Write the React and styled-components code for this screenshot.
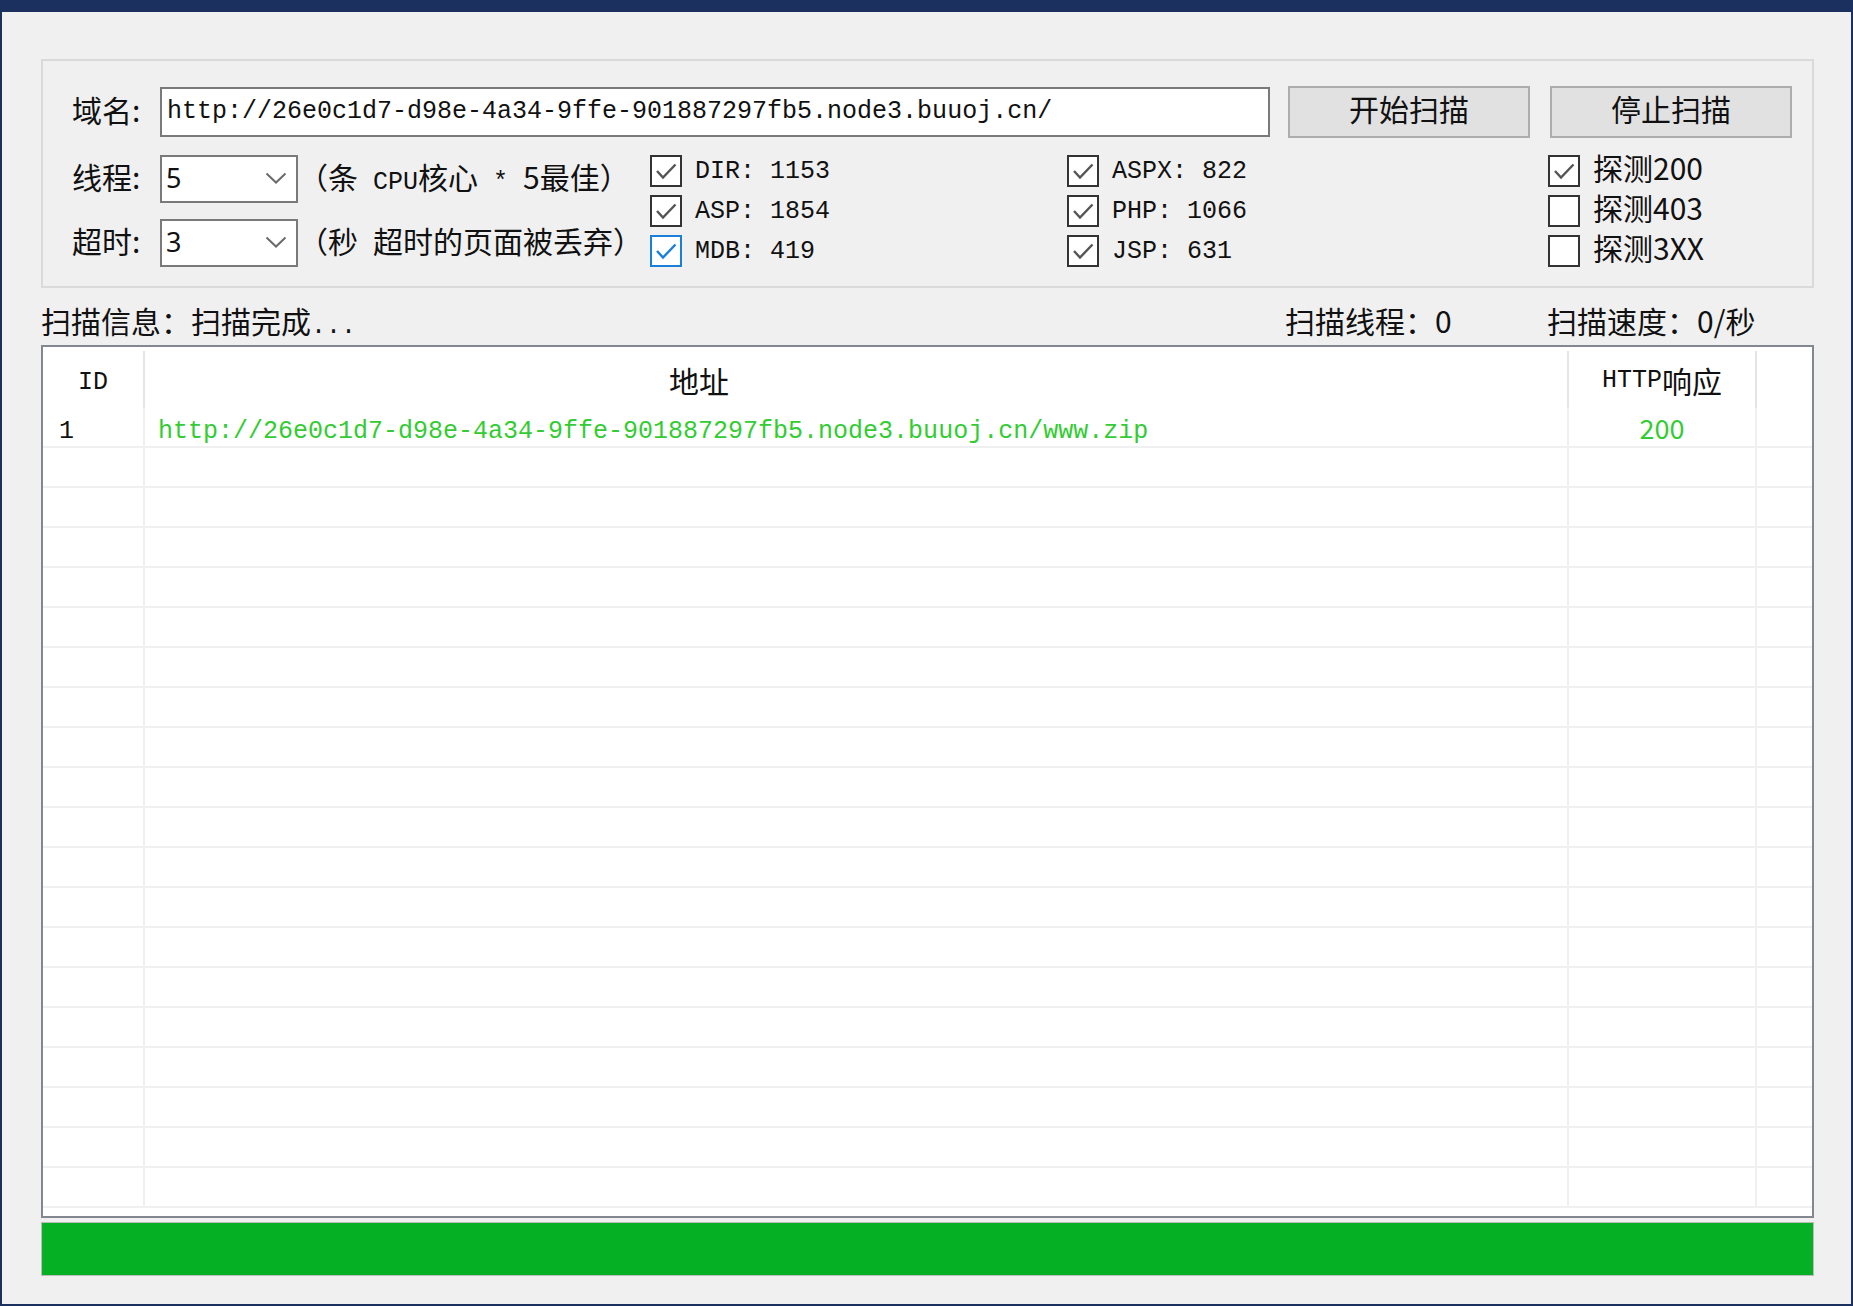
import React from 'react'
import styled, { createGlobalStyle } from 'styled-components'

const navy = '#1b305e'
const cjkFont = `"Noto Sans CJK SC", "Noto Sans", sans-serif`
const monoFont = `"Liberation Mono", "Noto Sans CJK SC", monospace`
const listColumns = '102px 1424px 188px 1fr'

const GlobalStyle = createGlobalStyle`
  html, body {
    margin: 0;
    padding: 0;
    background: ${navy};
  }
  body {
    font-family: ${cjkFont};
  }
`

const Window = styled.div`
  width: 1853px;
  height: 1306px;
  box-sizing: border-box;
  border: 2px solid ${navy};
  border-top-width: 12px;
  background: #f0f0f0;
  padding: 47px 37px 28px 39px;
  display: flex;
  flex-direction: column;
  color: #111;
  font-size: 30px;
`

const Latin = styled.span`
  font-family: ${monoFont};
  font-size: 25px;
`

const GroupBox = styled.div`
  height: 229px;
  box-sizing: border-box;
  border: 2px solid #dadada;
  padding: 24px 20px 19px 29px;
  display: flex;
  flex-direction: column;
  gap: 17px;
`

const TopRow = styled.div`
  display: flex;
  align-items: center;
  height: 53px;
`

const FieldLabel = styled.span`
  width: 88px;
  flex: none;
  padding-bottom: 6px;
  line-height: 1;
  white-space: nowrap;
`

const UrlInput = styled.div`
  flex: 1;
  height: 50px;
  box-sizing: border-box;
  border: 2px solid #7a7a7a;
  background: #fff;
  display: flex;
  align-items: center;
  padding-left: 5px;
  margin-right: 18px;
  font-family: ${monoFont};
  font-size: 25px;
  white-space: nowrap;
  overflow: hidden;
`

const Button = styled.div`
  width: 242px;
  height: 52px;
  box-sizing: border-box;
  border: 2px solid #adadad;
  background: #e1e1e1;
  display: flex;
  align-items: center;
  justify-content: center;
  padding-bottom: 7px;
  line-height: 1;
  & + & {
    margin-left: 20px;
  }
`

const OptionsGrid = styled.div`
  display: grid;
  grid-template-columns: 578px 417px 481px 1fr;
  grid-template-rows: repeat(3, 32px);
  row-gap: 8px;
  grid-auto-flow: column;
`

const LimitsBlock = styled.div`
  grid-row: 1 / 4;
  grid-column: 1;
  display: flex;
  flex-direction: column;
  justify-content: space-between;
`

const LimitRow = styled.div`
  display: flex;
  align-items: center;
  height: 48px;
`

const Combo = styled.div`
  width: 138px;
  height: 48px;
  flex: none;
  box-sizing: border-box;
  border: 2px solid #7a7a7a;
  background: #fff;
  display: flex;
  align-items: center;
  justify-content: space-between;
  padding: 0 9px 3px 4px;
  font-family: "Noto Sans", sans-serif;
  font-size: 27px;
  line-height: 1;
`

const Hint = styled.span`
  padding-bottom: 3px;
  white-space: nowrap;
  line-height: 1;
`

const CheckItem = styled.div`
  display: flex;
  align-items: center;
  gap: 13px;
  line-height: 1;
  white-space: nowrap;
`

const CheckText = styled.span`
  padding-bottom: 9px;
`

const Box = styled.div`
  width: 32px;
  height: 32px;
  flex: none;
  box-sizing: border-box;
  border: 2px solid ${p => (p.$focus ? '#1a7fd9' : '#333')};
  background: #fff;
  display: flex;
  align-items: center;
  justify-content: center;
`

const StatusBar = styled.div`
  height: 57px;
  box-sizing: border-box;
  padding-top: 12px;
  display: grid;
  grid-template-columns: 1244px 262px 1fr;
  line-height: 40px;
  white-space: nowrap;
`

const ListView = styled.div`
  height: 873px;
  box-sizing: border-box;
  border: 2px solid #828790;
  background: #fff;
  overflow: hidden;
`

const HeaderRow = styled.div`
  display: grid;
  grid-template-columns: ${listColumns};
  height: 61px;
`

const HeaderCell = styled.div`
  display: flex;
  align-items: center;
  justify-content: ${p => (p.$indent ? 'flex-start' : 'center')};
  padding: ${p => p.$pad ?? 1}px 0 0 ${p => p.$indent || 0}px;
  margin-top: 4px;
  box-sizing: border-box;
  border-right: ${p => (p.$filler ? 'none' : '2px solid #e5e5e5')};
  line-height: 1;
  white-space: nowrap;
`

const Row = styled.div`
  display: grid;
  grid-template-columns: ${listColumns};
  height: 40px;
  box-sizing: border-box;
  border-bottom: 2px solid #f0f0f0;
`

const Cell = styled.div`
  display: flex;
  align-items: center;
  justify-content: ${p => (p.$center ? 'center' : 'flex-start')};
  padding: ${p => (p.$latin ? 9 : 0)}px 0 0 ${p => p.$indent || 0}px;
  border-right: ${p => (p.$filler ? 'none' : '2px solid #f0f0f0')};
  color: ${p => (p.$ok ? '#33cc33' : '#111')};
  font-size: 27px;
  line-height: 1;
  white-space: nowrap;
  overflow: hidden;
`

const Progress = styled.div`
  margin-top: 4px;
  height: 54px;
  box-sizing: border-box;
  border: 1px solid #bcbcbc;
  background: #e6e6e6;
`

const ProgressFill = styled.div`
  height: 100%;
  width: ${p => p.$value}%;
  background: #06b025;
`

const Chevron = () => (
  <svg width="22" height="12" viewBox="0 0 22 12">
    <path d="M1.5 1.5 L11 10.5 L20.5 1.5" fill="none" stroke="#6b6b6b" strokeWidth="2" />
  </svg>
)

const Checkbox = ({ checked, focus, children }) => (
  <CheckItem>
    <Box $focus={focus}>
      {checked && (
        <svg width="28" height="28" viewBox="0 0 28 28">
          <path
            d="M5 14 L11 20.5 L23.5 7.5"
            fill="none"
            stroke={focus ? '#1a7fd9' : '#555'}
            strokeWidth="2.4"
          />
        </svg>
      )}
    </Box>
    <CheckText>{children}</CheckText>
  </CheckItem>
)

const url = 'http://26e0c1d7-d98e-4a34-9ffe-901887297fb5.node3.buuoj.cn/'

const dicts = [
  { name: 'DIR', count: 1153 },
  { name: 'ASP', count: 1854 },
  { name: 'MDB', count: 419, focus: true },
  { name: 'ASPX', count: 822 },
  { name: 'PHP', count: 1066 },
  { name: 'JSP', count: 631 },
]

const probes = [
  { label: '探测200', checked: true },
  { label: '探测403', checked: false },
  { label: '探测3XX', checked: false },
]

const results = [{ id: 1, address: url + 'www.zip', code: 200 }]
const EMPTY_ROWS = 19

const App = () => (
  <>
    <GlobalStyle />
    <Window>
      <GroupBox>
        <TopRow>
          <FieldLabel>域名:</FieldLabel>
          <UrlInput>{url}</UrlInput>
          <Button>开始扫描</Button>
          <Button>停止扫描</Button>
        </TopRow>
        <OptionsGrid>
          <LimitsBlock>
            <LimitRow>
              <FieldLabel>线程:</FieldLabel>
              <Combo>5<Chevron /></Combo>
              <Hint>（条<Latin> CPU</Latin>核心<Latin> * </Latin>5最佳）</Hint>
            </LimitRow>
            <LimitRow>
              <FieldLabel>超时:</FieldLabel>
              <Combo>3<Chevron /></Combo>
              <Hint>（秒<Latin> </Latin>超时的页面被丢弃）</Hint>
            </LimitRow>
          </LimitsBlock>
          {dicts.map(d => (
            <Checkbox key={d.name} checked focus={d.focus}>
              <Latin>{d.name}: {d.count}</Latin>
            </Checkbox>
          ))}
          {probes.map(p => (
            <Checkbox key={p.label} checked={p.checked}>{p.label}</Checkbox>
          ))}
        </OptionsGrid>
      </GroupBox>

      <StatusBar>
        <span>扫描信息：扫描完成<Latin>...</Latin></span>
        <span>扫描线程：0</span>
        <span>扫描速度：0/秒</span>
      </StatusBar>

      <ListView>
        <HeaderRow>
          <HeaderCell $pad={6}><Latin>ID</Latin></HeaderCell>
          <HeaderCell $indent={524}>地址</HeaderCell>
          <HeaderCell><Latin>HTTP</Latin>响应</HeaderCell>
          <HeaderCell $filler />
        </HeaderRow>
        {results.map(r => (
          <Row key={r.id}>
            <Cell $indent={16} $latin><Latin>{r.id}</Latin></Cell>
            <Cell $indent={13} $latin $ok><Latin>{r.address}</Latin></Cell>
            <Cell $center $ok>{r.code}</Cell>
            <Cell $filler />
          </Row>
        ))}
        {Array.from({ length: EMPTY_ROWS }, (_, i) => (
          <Row key={'empty' + i}>
            <Cell />
            <Cell />
            <Cell />
            <Cell $filler />
          </Row>
        ))}
      </ListView>

      <Progress>
        <ProgressFill $value={100} />
      </Progress>
    </Window>
  </>
)

export default App
